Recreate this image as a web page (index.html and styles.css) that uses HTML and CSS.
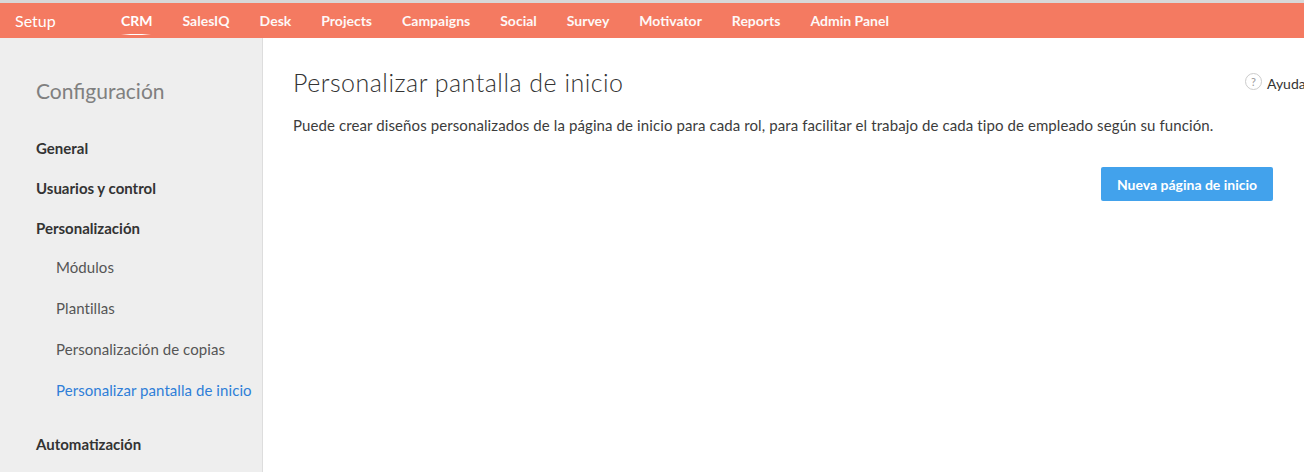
FILE: index.html
```html
<!DOCTYPE html>
<html lang="es">
<head>
    <meta charset="UTF-8">
    <title>Personalizar pantalla de inicio</title>
    <link rel="stylesheet" href="styles.css">
</head>
<body>
    <header class="top-bar">
        <span class="brand">Setup</span>
        <nav class="top-nav">
            <a class="top-link active">CRM</a>
            <a class="top-link">SalesIQ</a>
            <a class="top-link">Desk</a>
            <a class="top-link">Projects</a>
            <a class="top-link">Campaigns</a>
            <a class="top-link">Social</a>
            <a class="top-link">Survey</a>
            <a class="top-link">Motivator</a>
            <a class="top-link">Reports</a>
            <a class="top-link">Admin Panel</a>
        </nav>
    </header>

    <div class="layout">
        <aside class="sidebar">
            <h2 class="sidebar-title">Configuración</h2>
            <div class="side-group">General</div>
            <div class="side-group">Usuarios y control</div>
            <div class="side-group">Personalización</div>
            <ul class="side-list">
                <li class="side-item">Módulos</li>
                <li class="side-item">Plantillas</li>
                <li class="side-item">Personalización de copias</li>
                <li class="side-item current">Personalizar pantalla de inicio</li>
            </ul>
            <div class="side-group">Automatización</div>
        </aside>

        <main class="content">
            <div class="content-head">
                <h1 class="page-title">Personalizar pantalla de inicio</h1>
                <div class="help">
                    <span class="help-icon">?</span>
                    <span class="help-text">Ayuda</span>
                </div>
            </div>
            <p class="description">Puede crear diseños personalizados de la página de inicio para cada rol, para facilitar el trabajo de cada tipo de empleado según su función.</p>
            <div class="actions">
                <button type="button" class="primary-button">Nueva página de inicio</button>
            </div>
        </main>
    </div>
</body>
</html>
```

FILE: styles.css
```css
* {
    margin: 0;
    padding: 0;
    box-sizing: border-box;
}

html, body {
    height: 100%;
    overflow: hidden;
}

body {
    font-family: Lato, "Open Sans", "Liberation Sans", sans-serif;
    background-color: white;
    color: #333;
    display: flex;
    flex-direction: column;
}

.top-bar {
    display: flex;
    align-items: center;
    height: 38px;
    flex-shrink: 0;
    padding-left: 15px;
    background-color: #f47a61;
    border-top: 3px solid #d8d8d8;
    color: white;
}

.brand {
    width: 106px;
    font-size: 16px;
}

.top-nav {
    display: flex;
    gap: 30px;
    height: 100%;
}

.top-link {
    display: flex;
    align-items: center;
    height: 100%;
    font-size: 14px;
    font-weight: 700;
    color: #fff;
    opacity: 0.95;
}

.top-link.active {
    position: relative;
    opacity: 1;
}

.top-link.active::after {
    content: "";
    position: absolute;
    left: 0;
    right: 2px;
    bottom: 3px;
    height: 1px;
    background: linear-gradient(to right, transparent, white 30%, white 70%, transparent);
}

.layout {
    display: flex;
    flex: 1;
    min-height: 0;
}

.sidebar {
    width: 263px;
    flex-shrink: 0;
    padding: 40px 0 0 36px;
    background-color: #eee;
    border-right: 1px solid #ddd;
}

.sidebar-title {
    font-size: 21px;
    font-weight: 400;
    line-height: 26px;
    color: #808080;
    margin-bottom: 24px;
}

.side-group {
    font-size: 15px;
    font-weight: 700;
    line-height: 40px;
    color: #333;
}

.side-list {
    list-style: none;
    margin-top: -1px;
    padding: 0 0 13px 20px;
}

.side-item {
    font-size: 15px;
    line-height: 41px;
    letter-spacing: 0.07px;
    white-space: nowrap;
    color: #555;
}

.side-item.current {
    color: #2f7ed8;
}

.content {
    flex: 1;
    min-width: 0;
    padding: 29px 31px 0 30px;
}

.content-head {
    display: flex;
    justify-content: space-between;
    align-items: center;
    margin-right: -31px;
    overflow: hidden;
}

.page-title {
    font-size: 25px;
    font-weight: 300;
    line-height: 30px;
    letter-spacing: 0.5px;
    color: #333;
}

.help {
    display: flex;
    align-items: center;
    gap: 5px;
    width: 59px;
    flex-shrink: 0;
    margin-top: 2px;
    font-size: 14px;
    white-space: nowrap;
}

.help-icon {
    display: flex;
    justify-content: center;
    align-items: center;
    width: 17px;
    height: 17px;
    flex-shrink: 0;
    margin-top: -3px;
    border: 1px solid #ccc;
    border-radius: 50%;
    font-size: 11px;
    color: #999;
}

.description {
    margin-top: 18px;
    font-size: 15px;
    line-height: 20px;
    letter-spacing: 0.1px;
    color: #3c3c3c;
}

.actions {
    display: flex;
    justify-content: flex-end;
    margin-top: 32px;
}

.primary-button {
    width: 172px;
    height: 34px;
    background-color: #42a2ec;
    color: white;
    border: none;
    border-radius: 2px;
    font-family: inherit;
    font-size: 14px;
    font-weight: 700;
}
```
